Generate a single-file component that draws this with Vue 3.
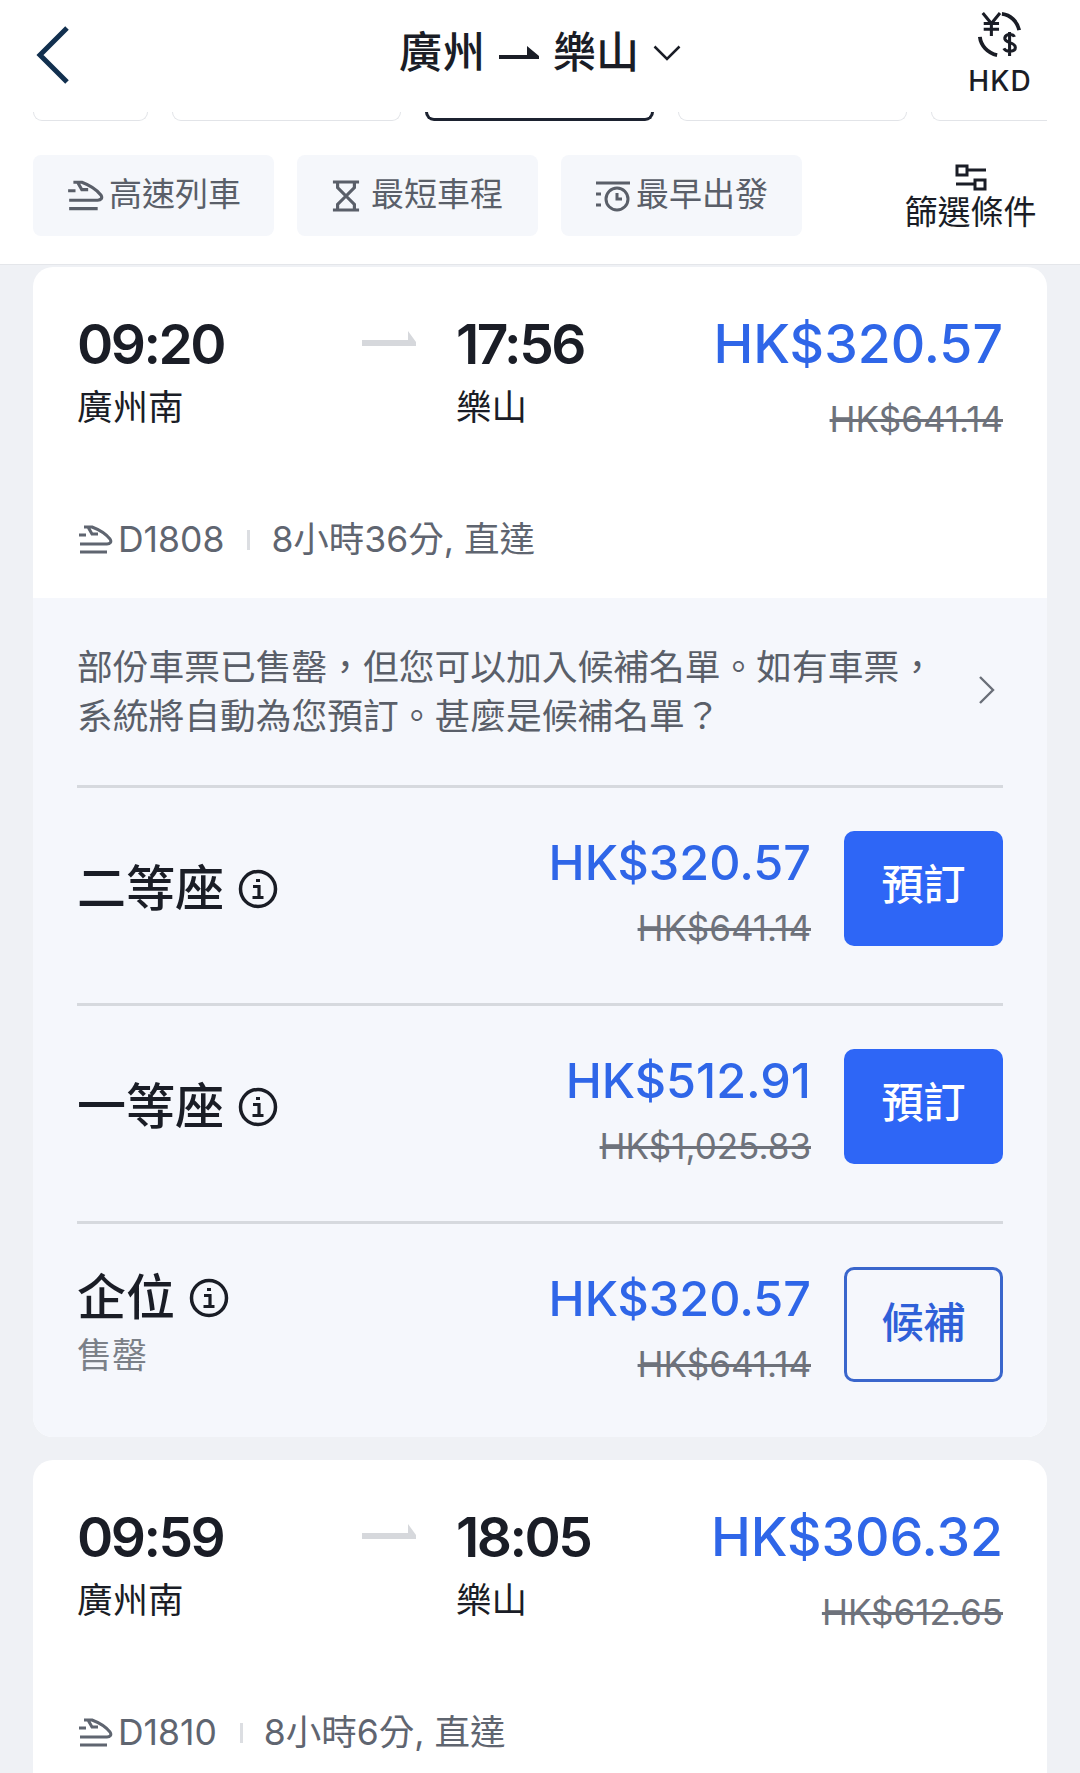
<template>
  <div class="page">
    <header class="head">
      <svg class="back" width="36" height="60" viewBox="0 0 36 60"><path d="M32 3 5 30l27 27" fill="none" stroke="#12304f" stroke-width="5"/></svg>
      <div class="title">
        <span>廣州</span>
        <svg width="40" height="18" viewBox="0 0 40 18"><path d="M0 11h28V2l12 10v3H0z" fill="#1a1d26"/></svg>
        <span>樂山</span>
        <svg width="28" height="16" viewBox="0 0 28 16"><path d="M1.500 1.500 14 14 26.500 1.500" fill="none" stroke="#1a1d26" stroke-width="2.500"/></svg>
      </div>
      <div class="currency">
        <svg width="46" height="48" viewBox="0 0 48 48" fill="none" stroke="#1a1d26" stroke-width="4">
          <path d="M26 3c9 1 16 8 18 17M3 27c1 9 8 17 18 19"/>
          <path d="M6 2l9 11 9-11M15 13v13M7 13h16M7 19h16" stroke-width="3.200"/>
          <path d="M39 27c-1-3-9-4-10 1-1 6 11 4 11 10 0 5-10 5-12 1M34 22v25" stroke-width="3.200"/>
        </svg>
        <span>HKD</span>
      </div>
    </header>

    <div class="dates">
      <div v-for="(w, i) in dateTabs" :key="i" class="date" :class="{ on: i === 2 }" :style="{ width: w + 'px' }"></div>
    </div>

    <div class="filters">
      <button class="chip">
        <svg width="38" height="32" viewBox="0 0 36 30" fill="none" stroke="#5a5f69" stroke-width="3">
          <path d="M7 2h8c8 3 14 7 18 12 2 3 0 5-3 5H3M2 10h7M21 9h-6l-4-7M3 27h27"/>
        </svg>
        高速列車
      </button>
      <button class="chip">
        <svg class="glass" width="28" height="32" viewBox="0 0 30 34" fill="none" stroke="#5a5f69" stroke-width="3.400">
          <path d="M1 2h28M1 32h28M6 2v6l9 9 9-9V2M15 17l-9 9v6M15 17l9 9v6"/>
        </svg>
        最短車程
      </button>
      <button class="chip">
        <svg class="clock" width="36" height="32" viewBox="0 0 36 32" fill="none" stroke="#5a5f69" stroke-width="3">
          <path d="M1 3h34M1 14h5M1 25h5"/>
          <circle cx="22" cy="19" r="11"/>
          <path d="M22 13v6h5"/>
        </svg>
        最早出發
      </button>
      <div class="more">
        <svg width="32" height="28" viewBox="0 0 32 28" fill="none" stroke="#1a1d26" stroke-width="3">
          <rect x="2" y="2" width="10" height="9"/>
          <rect x="20" y="16" width="10" height="9"/>
          <path d="M12 6h19M1 20h19"/>
        </svg>
        <span>篩選條件</span>
      </div>
    </div>

    <main class="list">
      <article v-for="c in cards" :key="c.code" class="card">
        <section class="summary">
          <div class="times">
            <div class="stop first">
              <div class="time">{{ c.dep }}</div>
              <div class="station">廣州南</div>
            </div>
            <svg class="arrow" width="54" height="16" viewBox="0 0 54 16"><path d="M0 9h46V0l8 11v4H0z" fill="#d6d8dc"/></svg>
            <div class="stop">
              <div class="time">{{ c.arr }}</div>
              <div class="station">樂山</div>
            </div>
            <div class="fare">
              <div class="now">{{ c.price }}</div>
              <s class="was">{{ c.old }}</s>
            </div>
          </div>
          <div class="meta">
            <svg width="36" height="30" viewBox="0 0 36 30" fill="none" stroke="#5f6570" stroke-width="3">
              <path d="M7 2h8c8 3 14 7 18 12 2 3 0 5-3 5H3M2 10h7M21 9h-6l-4-7M3 27h27"/>
            </svg>
            <span class="code">{{ c.code }}</span>
            <i class="sep"></i>
            <span>{{ c.trip }}</span>
          </div>
        </section>

        <section v-if="c.seats" class="detail">
          <div class="notice">
            <p>部份車票已售罄，但您可以加入候補名單。如有車票，<br />系統將自動為您預訂。甚麼是候補名單？</p>
            <svg width="18" height="30" viewBox="0 0 18 30"><path d="M2 2l13 13L2 28" fill="none" stroke="#6a6f79" stroke-width="2.400"/></svg>
          </div>
          <div v-for="s in c.seats" :key="s.name" class="seat">
            <div class="seat-name">
              <div class="name-line">
                <span class="name">{{ s.name }}</span>
                <svg width="40" height="40" viewBox="0 0 40 40" fill="none" stroke="#1a1d26">
                  <circle cx="20" cy="20" r="17.500" stroke-width="3.500"/>
                  <path d="M15 17.500h6v11M14.500 28.500h11M18 11.500h4" stroke-width="3.200"/>
                </svg>
              </div>
              <div v-if="s.note" class="note">{{ s.note }}</div>
            </div>
            <div class="seat-fare">
              <div class="seat-now">{{ s.price }}</div>
              <s class="was">{{ s.old }}</s>
            </div>
            <button class="book" :class="{ wait: s.wait }">{{ s.wait ? '候補' : '預訂' }}</button>
          </div>
        </section>
      </article>
    </main>
  </div>
</template>

<script setup>
const dateTabs = [115, 229, 229, 229, 116];

const cards = [
  {
    code: "D1808",
    dep: "09:20",
    arr: "17:56",
    price: "HK$320.57",
    old: "HK$641.14",
    trip: "8小時36分, 直達",
    seats: [
      { name: "二等座", price: "HK$320.57", old: "HK$641.14" },
      { name: "一等座", price: "HK$512.91", old: "HK$1,025.83" },
      { name: "企位", note: "售罄", price: "HK$320.57", old: "HK$641.14", wait: true }
    ]
  },
  {
    code: "D1810",
    dep: "09:59",
    arr: "18:05",
    price: "HK$306.32",
    old: "HK$612.65",
    trip: "8小時6分, 直達"
  }
];
</script>

<style>
html,
body {
  margin: 0;
  overflow: hidden;
  background: #eff1f5;
}
</style>

<style scoped>
.page {
  width: 1080px;
  height: 1773px;
  overflow: hidden;
  background: #eff1f5;
  color: #1a1d26;
  font-family: Inter, "Noto Sans CJK TC", sans-serif;
}

button {
  font-family: inherit;
  border: 0;
}

.head {
  height: 112px;
  background: #fff;
  display: grid;
  grid-template-columns: 200px 1fr 200px;
  align-items: start;
  box-sizing: border-box;
}

.back {
  margin-left: 35px;
  margin-top: 25px;
}

.title {
  display: flex;
  justify-content: center;
  align-items: center;
  gap: 14px;
  font-size: 43px;
  font-weight: 500;
  line-height: 1;
  margin-top: 31px;
}

.currency {
  justify-self: end;
  width: 110px;
  margin: 10px 25px 0 0;
  display: flex;
  flex-direction: column;
  align-items: center;
  font-size: 28px;
  font-weight: 500;
  letter-spacing: 1px;
  line-height: 46px;
}

.dates {
  height: 9px;
  background: #fff;
  padding-left: 33px;
  display: flex;
  gap: 24px;
  overflow: hidden;
}

.date {
  flex: none;
  height: 9px;
  box-sizing: border-box;
  border: 1px solid #e2e4e8;
  border-top: 0;
  border-radius: 0 0 9px 9px;
}

.date:last-child {
  border-right: 0;
  border-radius: 0 0 0 9px;
}

.date.on {
  border: 3px solid #1c2230;
  border-top: 0;
}

.filters {
  height: 144px;
  background: #fff;
  border-bottom: 1px solid #e4e6ea;
  padding: 34px 0 0 33px;
  box-sizing: border-box;
  display: flex;
  align-items: flex-start;
  gap: 23px;
}

.chip {
  width: 241px;
  height: 81px;
  background: #f5f7fb;
  border-radius: 8px;
  color: #5a5f69;
  font-size: 33px;
  padding: 0 0 7px;
  display: flex;
  align-items: center;
  justify-content: center;
  gap: 5px;
}

.chip svg {
  margin-top: 8px;
}

.chip .glass {
  margin-right: 6px;
}

.more {
  margin-left: 79px;
  width: 133px;
  margin-top: 9px;
  display: flex;
  flex-direction: column;
  align-items: center;
  font-size: 33px;
  line-height: 40px;
  white-space: nowrap;
}

.list {
  padding: 2px 33px 0;
  display: flex;
  flex-direction: column;
  gap: 23px;
}

.card {
  border-radius: 20px;
  overflow: hidden;
  background: #fff;
}

.summary {
  height: 331px;
  box-sizing: border-box;
  padding: 40px 44px 0;
}

.times {
  display: flex;
  align-items: flex-start;
  height: 208px;
}

.stop.first {
  width: 285px;
}

.stop {
  flex: none;
}

.arrow {
  flex: none;
  margin: 24px 40px 0 0;
}

.time {
  font-size: 55px;
  font-weight: 600;
  letter-spacing: -2.500px;
  line-height: 74px;
}

.station {
  font-size: 35.500px;
  line-height: 54px;
}

.fare {
  margin-left: auto;
  text-align: right;
}

.now {
  font-size: 53.500px;
  font-weight: 500;
  color: #2f66e8;
  line-height: 74px;
}

.was {
  display: block;
  font-size: 35px;
  color: #6e727b;
  line-height: 44px;
  margin-top: 16px;
}

.meta {
  display: flex;
  align-items: center;
  gap: 5px;
  font-size: 35.500px;
  color: #5f6570;
  line-height: 50px;
}

.sep {
  width: 3px;
  height: 20px;
  background: #dcdee2;
  margin: 0 16px 0 18px;
}

.detail {
  background: #f5f7fc;
  padding: 0 44px;
  height: 839px;
}

.notice {
  height: 187px;
  box-sizing: border-box;
  padding-top: 45px;
  display: flex;
  justify-content: space-between;
  color: #5a5f69;
  font-size: 35.750px;
  line-height: 49px;
  white-space: nowrap;
}

.notice p {
  margin: 0;
}

.notice svg {
  margin: 32px 7px 0 0;
}

.seat {
  height: 218px;
  box-sizing: border-box;
  border-top: 3px solid #d6d9de;
  padding-top: 43px;
  display: flex;
  align-items: flex-start;
}

.seat-name {
  height: 115px;
  display: flex;
  flex-direction: column;
  justify-content: center;
}

.name-line {
  display: flex;
  align-items: center;
  gap: 14px;
}

.name {
  font-size: 49px;
  font-weight: 500;
  line-height: 60px;
}

.note {
  font-size: 35px;
  line-height: 54px;
  color: #7b8088;
}

.seat-fare {
  margin: -3px 33px 0 auto;
  text-align: right;
}

.seat-now {
  font-size: 48.500px;
  font-weight: 500;
  color: #2f66e8;
  line-height: 70px;
}

.seat-fare .was {
  margin-top: 8px;
}

.book {
  width: 159px;
  height: 115px;
  flex: none;
  border-radius: 10px;
  background: #2e66f6;
  color: #fff;
  font-size: 42px;
  font-weight: 500;
  padding: 0 0 14px;
}

.book.wait {
  background: transparent;
  border: 3px solid #3a66cc;
  color: #2f60d8;
  padding-bottom: 10px;
}
</style>
